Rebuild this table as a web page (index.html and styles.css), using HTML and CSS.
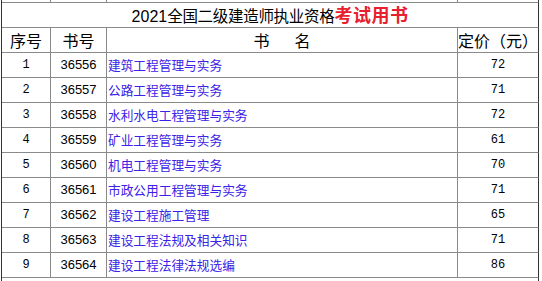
FILE: index.html
```html
<!DOCTYPE html>
<html lang="zh-CN">
<head>
<meta charset="utf-8">
<title>2021全国二级建造师执业资格考试用书</title>
<link rel="stylesheet" href="styles.css">
</head>
<body>
<table class="book-table">
  <colgroup>
    <col class="c-no">
    <col class="c-isbn">
    <col class="c-name">
    <col class="c-price">
  </colgroup>
  <tr class="prev">
    <td></td><td></td><td></td><td class="last"></td>
  </tr>
  <tr class="title-row">
    <td colspan="4" class="last title"><span class="t-num">2021</span>全国二级建造师执业资格<span class="t-red">考试用书</span></td>
  </tr>
  <tr class="head">
    <td>序号</td><td>书号</td><td>书<span class="sp"></span>名</td><td class="last">定价（元）</td>
  </tr>
  <tr><td class="num">1</td><td class="isbn">36556</td><td class="name">建筑工程管理与实务</td><td class="num last">72</td></tr>
  <tr><td class="num">2</td><td class="isbn">36557</td><td class="name">公路工程管理与实务</td><td class="num last">71</td></tr>
  <tr><td class="num">3</td><td class="isbn">36558</td><td class="name">水利水电工程管理与实务</td><td class="num last">72</td></tr>
  <tr><td class="num">4</td><td class="isbn">36559</td><td class="name">矿业工程管理与实务</td><td class="num last">61</td></tr>
  <tr><td class="num">5</td><td class="isbn">36560</td><td class="name">机电工程管理与实务</td><td class="num last">70</td></tr>
  <tr><td class="num">6</td><td class="isbn">36561</td><td class="name">市政公用工程管理与实务</td><td class="num last">71</td></tr>
  <tr><td class="num">7</td><td class="isbn">36562</td><td class="name">建设工程施工管理</td><td class="num last">65</td></tr>
  <tr><td class="num">8</td><td class="isbn">36563</td><td class="name">建设工程法规及相关知识</td><td class="num last">71</td></tr>
  <tr><td class="num">9</td><td class="isbn">36564</td><td class="name">建设工程法律法规选编</td><td class="num last">86</td></tr>
  <tr class="foot">
    <td colspan="4" class="last note">订购热线</td>
  </tr>
</table>
</body>
</html>
```
FILE: styles.css
```css
html, body {
  margin: 0;
  padding: 0;
  background: #ffffff;
}

body {
  padding-left: 1px;
  font-family: "Noto Sans CJK SC", "Liberation Sans", sans-serif;
  color: #000;
}

.book-table {
  border-collapse: separate;
  border-spacing: 0;
  border-left: 1px solid #333333;
  table-layout: fixed;
  width: 538px;
}

.c-no { width: 49px; }
.c-isbn { width: 56px; }
.c-name { width: 351px; }
.c-price { width: 81px; }

.book-table td {
  padding: 0;
  border-right: 1px solid #8a8a8a;
  border-bottom: 1px solid #8a8a8a;
  text-align: center;
  vertical-align: middle;
  white-space: nowrap;
}

.book-table td.last {
  border-right-color: #333333;
}

.book-table tr {
  height: 25px;
}

.book-table tr.prev {
  height: 3px;
}

.prev td {
  font-size: 0;
  line-height: 0;
  height: 2px;
}

.title {
  font-size: 15.5px;
  line-height: 20px;
  letter-spacing: -0.3px;
}

.t-num {
  font-family: "Liberation Sans", sans-serif;
  font-size: 16px;
  letter-spacing: 0;
}

.t-red {
  color: #e8202e;
  font-weight: bold;
  font-size: 18px;
  letter-spacing: 0.5px;
}

.head td {
  font-size: 16px;
  line-height: 20px;
}

.sp {
  display: inline-block;
  width: 25px;
}

.num {
  font-family: "Liberation Mono", monospace;
  font-size: 12px;
  line-height: 16px;
}

.isbn {
  font-family: "Liberation Sans", sans-serif;
  font-size: 13px;
  line-height: 16px;
}

.book-table td.name {
  text-align: left;
  padding-left: 1px;
  color: #3b22e6;
  font-size: 12.7px;
  line-height: 16px;
}

.book-table tr.foot {
  height: 30px;
}

.book-table td.note {
  border-bottom: 0;
  text-align: left;
  vertical-align: top;
  padding-left: 335px;
  padding-top: 1px;
  color: #e8202e;
  font-weight: bold;
  font-size: 18px;
  line-height: 20px;
  letter-spacing: 4px;
}
```
